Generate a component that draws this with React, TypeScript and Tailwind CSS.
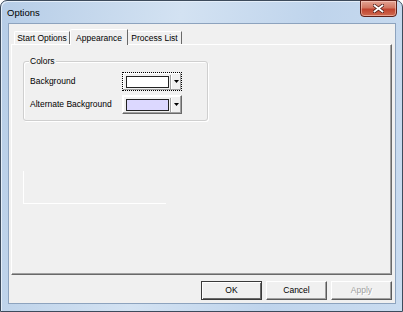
const font = "font-['Liberation_Sans',Arial,sans-serif]";

function ColorPicker({ color, focused }: { color: string; focused?: boolean }) {
  return (
    <div
      className={`w-[60px] h-[19px] flex items-center border ${
        focused
          ? 'border-dotted border-black'
          : 'border-t-white border-l-white border-r-[#696969] border-b-[#696969]'
      } shadow-[inset_-1px_-1px_0_#a0a0a0,inset_1px_1px_0_#ffffff]`}
    >
      <div className="ml-[3px] w-[43px] h-[12px] border border-[#222]" style={{ backgroundColor: color }} />
      <div className="ml-[1px] h-[14px] w-[2px] border-l border-l-[#a0a0a0] border-r border-r-white" />
      <div className="flex-1 flex justify-center">
        <svg width="5" height="3" viewBox="0 0 5 3">
          <path d="M0 0h5L2.5 3z" fill="#000" />
        </svg>
      </div>
    </div>
  );
}

function Button({ label, isDefault, disabled }: { label: string; isDefault?: boolean; disabled?: boolean }) {
  return (
    <div
      className={`w-[61px] h-[19px] flex items-center justify-center border ${
        isDefault
          ? 'border-[#3a3a3a] shadow-[inset_1px_1px_0_#ffffff,inset_-1px_-1px_0_#696969]'
          : 'border-t-white border-l-white border-r-[#5a5a5a] border-b-[#5a5a5a] shadow-[inset_-1px_-1px_0_#a0a0a0]'
      } bg-[#f0f0f0]`}
    >
      <span className={disabled ? 'text-[#a0a0a0] [text-shadow:1px_1px_0_#ffffff]' : ''}>{label}</span>
    </div>
  );
}

export default function App() {
  return (
    <div className={`w-[403px] h-[312px] bg-white ${font} text-[8.5px] leading-none text-black`}>
      <div className="w-full h-full rounded-t-[7px] border border-[#3d4b5c] bg-[linear-gradient(100deg,#b6cde7_0%,#d3e2f2_40%,#bfd4ec_70%,#cadcf0_100%)] flex flex-col pl-[7px] pr-[6px] pb-[7px] shadow-[inset_1px_1px_0_#e4eef9]">
        {/* Title bar */}
        <div className="h-[22px] flex items-start justify-between">
          <span className="text-[9.5px] mt-[7px] -ml-[1px]">Options</span>
          <div className="w-[37px] h-[17px] -mr-[1px] -mt-[1px] rounded-b-[4px] border border-[#5d2019] bg-[linear-gradient(180deg,#e3a494_0%,#d27661_45%,#c0432e_55%,#cf6a50_100%)] flex items-center justify-center shadow-[inset_0_0_0_1px_rgba(255,220,210,0.5)]">
            <svg width="11" height="9" viewBox="0 0 11 9">
              <path d="M1.5 1.5L9.5 7.5M9.5 1.5L1.5 7.5" stroke="#4a1a14" strokeWidth="3.4" strokeLinecap="square" />
              <path d="M1.5 1.5L9.5 7.5M9.5 1.5L1.5 7.5" stroke="#ffffff" strokeWidth="1.8" strokeLinecap="square" />
            </svg>
          </div>
        </div>

        {/* Client area */}
        <div className="flex-1 bg-[#f0f0f0] border border-[#8da3be] flex flex-col pl-[2px] pr-[3px] pt-[5px]">
          {/* Tabs */}
          <div className="flex items-end ml-[3px] h-[16px] relative z-10 -mb-[1px]">
            <div className="w-[56px] h-[13px] mb-[1px] border-t border-l border-white border-r border-r-[#696969] rounded-tl-[2px] flex items-center justify-center pt-[1px]">
              Start Options
            </div>
            <div className="w-[58px] h-[16px] bg-[#f0f0f0] border-t border-l border-white border-r border-r-[#696969] rounded-tl-[2px] flex items-start justify-center pt-[4px]">
              Appearance
            </div>
            <div className="w-[54px] h-[13px] mb-[1px] border-t border-white border-r border-r-[#696969] flex items-center justify-center pt-[1px]">
              Process List
            </div>
          </div>

          {/* Panel */}
          <div className="h-[231px] border-t border-l border-white border-r border-b border-r-[#696969] border-b-[#696969] shadow-[inset_-1px_-1px_0_#a0a0a0] pl-[11px] pt-[16px] flex flex-col">
            <div className="relative w-[185px] h-[60px] border border-[#cfcfcf] rounded-[3px] shadow-[inset_1px_1px_0_#ffffff,1px_1px_0_#ffffff] pl-[6px] pt-[10px] flex flex-col gap-[4px]">
              <span className="absolute -top-[5px] left-[5px] px-[1px] bg-[#f0f0f0]">Colors</span>
              <div className="flex items-center">
                <span className="w-[92px]">Background</span>
                <ColorPicker color="#ffffff" focused />
              </div>
              <div className="flex items-center">
                <span className="w-[92px]">Alternate Background</span>
                <ColorPicker color="#dcd8ff" />
              </div>
            </div>
            <div className="mt-[50px] w-[143px] h-[33px] border-l border-b border-white" />
          </div>

          {/* Buttons */}
          <div className="flex justify-end gap-[4px] mt-[6px]">
            <Button label="OK" isDefault />
            <Button label="Cancel" />
            <Button label="Apply" disabled />
          </div>
        </div>
      </div>
    </div>
  );
}
